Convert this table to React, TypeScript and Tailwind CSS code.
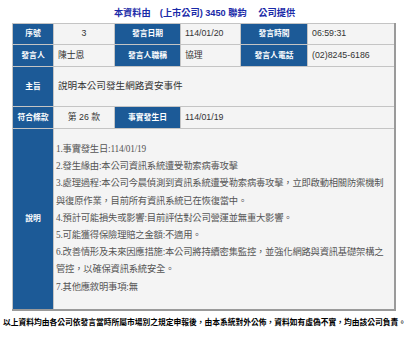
// AnnouncementDetail

const th =
  "bg-[#1c5a97] text-white font-bold text-[7.8px] text-center border border-[#c4c4c4] p-0";
const td =
  "bg-[#f4f4f4] text-[#333] text-[8.8px] border border-[#c4c4c4] px-[4px] py-0";

const lines = [
  "1.事實發生日:114/01/19",
  "2.發生緣由:本公司資訊系統遭受勒索病毒攻擊",
  "3.處理過程:本公司今晨偵測到資訊系統遭受勒索病毒攻擊，立即啟動相關防禦機制與復原作業，目前所有資訊系統已在恢復當中。",
  "4.預計可能損失或影響:目前評估對公司營運並無重大影響。",
  "5.可能獲得保險理賠之金額:不適用。",
  "6.改善情形及未來因應措施:本公司將持續密集監控，並強化網路與資訊基礎架構之管控，以確保資訊系統安全。",
  "7.其他應敘明事項:無",
];

export default function App() {
  return (
    <div className="w-[409px] h-[350px] bg-white font-['Liberation_Sans','Noto_Sans_CJK_TC',sans-serif] overflow-hidden">
      <div className="pt-[8px] h-[23px] text-center text-[#1a2aa8] font-bold text-[9.2px] leading-[11px]">
        本資料由　(上市公司) 3450 聯鈞　 公司提供
      </div>
      <table className="ml-[12px] w-[384px] border-collapse table-fixed border-r-2 border-b-2 border-r-[#9a9a9a] border-b-[#9a9a9a]">
        <colgroup>
          <col className="w-[41px]" />
          <col className="w-[61px]" />
          <col className="w-[66px]" />
          <col className="w-[60px]" />
          <col className="w-[67px]" />
          <col />
        </colgroup>
        <tbody>
          <tr className="h-[21px]">
            <td className={th}>序號</td>
            <td className={td + " text-center"}>3</td>
            <td className={th}>發言日期</td>
            <td className={td}>114/01/20</td>
            <td className={th}>發言時間</td>
            <td className={td}>06:59:31</td>
          </tr>
          <tr className="h-[22px]">
            <td className={th}>發言人</td>
            <td className={td}>陳士恩</td>
            <td className={th}>發言人職稱</td>
            <td className={td}>協理</td>
            <td className={th}>發言人電話</td>
            <td className={td}>(02)8245-6186</td>
          </tr>
          <tr className="h-[40px]">
            <td className={th}>主旨</td>
            <td className={td + " text-[9.6px]"} colSpan={5}>
              說明本公司發生網路資安事件
            </td>
          </tr>
          <tr className="h-[22px]">
            <td className={th + " text-[7.6px]"}>符合條款</td>
            <td className={td + " text-center"}>第 26 款</td>
            <td className={th}>事實發生日</td>
            <td className={td} colSpan={3}>
              114/01/19
            </td>
          </tr>
          <tr className="h-[181px]">
            <td className={th}>說明</td>
            <td
              className="bg-[#f4f4f4] border border-[#c4c4c4] pl-[2px] pr-[2px] pt-[12px] pb-[12px] align-top text-[#555] text-[9.3px] leading-[17.2px] font-['Liberation_Serif','Noto_Sans_CJK_TC',serif] tracking-[-0.2px]"
              colSpan={5}
            >
              {lines.map((l) => (
                <div key={l}>{l}</div>
              ))}
            </td>
          </tr>
        </tbody>
      </table>
      <div className="mt-[7px] text-center text-black font-bold text-[7.75px] leading-[10px] whitespace-nowrap">
        以上資料均由各公司依發言當時所屬市場別之規定申報後，由本系統對外公佈，資料如有虛偽不實，均由該公司負責。
      </div>
    </div>
  );
}
